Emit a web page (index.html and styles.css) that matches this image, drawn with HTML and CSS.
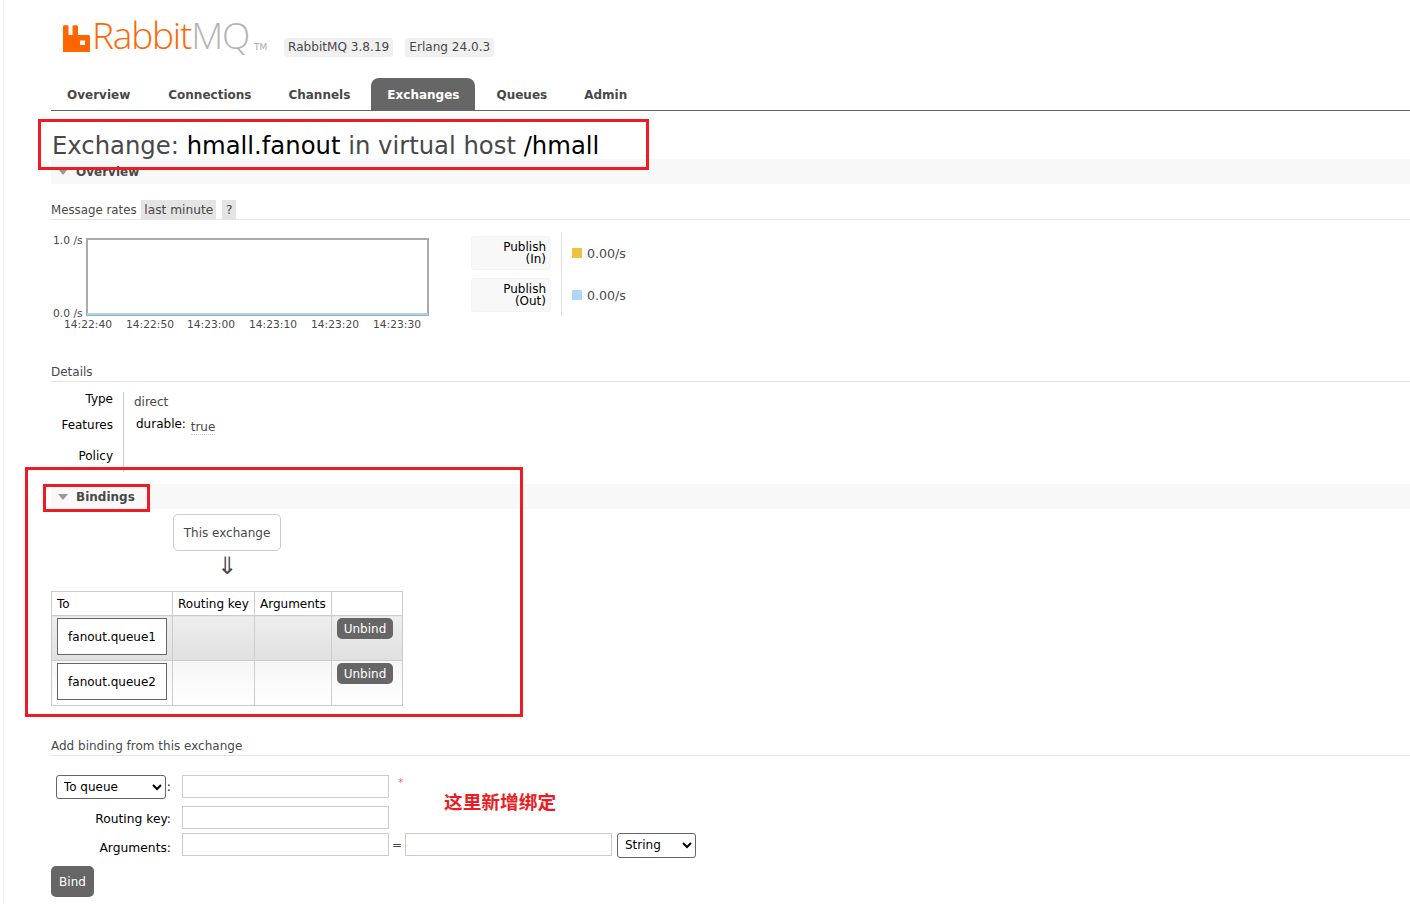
FILE: index.html
```html
<!DOCTYPE html>
<html lang="en">
<head>
    <meta charset="UTF-8">
    <meta name="viewport" content="width=device-width, initial-scale=1.0">
    <title>RabbitMQ Management</title>
    <link rel="stylesheet" href="styles.css">
</head>
<body>
    <div class="page">
        <header class="top">
            <div class="logo">
                <svg class="logo-icon" width="27" height="27" viewBox="0 0 27 27">
                    <path fill="#ff6600" fill-rule="evenodd" d="M0 27V1.5a1.2 1.2 0 0 1 1.2-1.2h3.1a1.2 1.2 0 0 1 1.2 1.2V10h4V1.5a1.2 1.2 0 0 1 1.2-1.2h3.1a1.2 1.2 0 0 1 1.2 1.2V10h10.6a1.4 1.4 0 0 1 1.4 1.4V27zM17 15.5v4.5h5v-4.5z"/>
                </svg>
                <span class="logo-text">Rabbit</span><span class="logo-text logo-mq">MQ</span><span class="logo-tm">TM</span>
            </div>
            <span class="version">RabbitMQ 3.8.19</span>
            <span class="version">Erlang 24.0.3</span>
        </header>

        <nav class="tabs">
            <a>Overview</a>
            <a>Connections</a>
            <a>Channels</a>
            <a class="active">Exchanges</a>
            <a>Queues</a>
            <a>Admin</a>
        </nav>

        <h1>Exchange: <b>hmall.fanout</b> in virtual host <b>/hmall</b></h1>

        <section class="section">
            <h2 class="section-bar"><i class="caret"></i>Overview</h2>
            <h3 class="sub first">Message rates <span class="chip">last minute</span> <span class="chip help">?</span></h3>
            <div class="rates">
                <svg class="chart" width="380" height="100" viewBox="0 0 380 100">
                    <g class="axis">
                        <text x="3" y="12">1.0 /s</text>
                        <text x="3" y="85">0.0 /s</text>
                        <text x="14" y="96">14:22:40</text>
                        <text x="76" y="96">14:22:50</text>
                        <text x="137" y="96">14:23:00</text>
                        <text x="199" y="96">14:23:10</text>
                        <text x="261" y="96">14:23:20</text>
                        <text x="323" y="96">14:23:30</text>
                    </g>
                    <rect x="37" y="7" width="341" height="76" fill="#fff" stroke="#aaa" stroke-width="2"/>
                    <rect x="37" y="81" width="341" height="2" fill="#a9d3f5"/>
                </svg>
                <div class="legend">
                    <div class="legend-labels">
                        <div class="legend-label">Publish<br>(In)</div>
                        <div class="legend-label">Publish<br>(Out)</div>
                    </div>
                    <div class="legend-values">
                        <div class="legend-value"><i class="swatch yellow"></i>0.00/s</div>
                        <div class="legend-value"><i class="swatch blue"></i>0.00/s</div>
                    </div>
                </div>
            </div>

            <h3 class="sub details">Details</h3>
            <div class="facts">
                <div class="fact-keys">
                    <div class="fact-key">Type</div>
                    <div class="fact-key">Features</div>
                    <div class="fact-key policy">Policy</div>
                </div>
                <div class="fact-vals">
                    <div class="fact-val">direct</div>
                    <div class="fact-val feature">durable: <abbr>true</abbr></div>
                </div>
            </div>
        </section>

        <section class="section bindings">
            <h2 class="section-bar"><i class="caret"></i>Bindings</h2>
            <div class="this-exchange">This exchange</div>
            <div class="down-arrow">⇓</div>
            <table class="list">
                <thead>
                    <tr><th class="c-to">To</th><th class="c-key">Routing key</th><th class="c-args">Arguments</th><th class="c-act"></th></tr>
                </thead>
                <tbody>
                    <tr class="alt1">
                        <td class="to"><span class="queue">fanout.queue1</span></td><td></td><td></td>
                        <td class="act"><button class="btn small">Unbind</button></td>
                    </tr>
                    <tr class="alt2">
                        <td class="to"><span class="queue">fanout.queue2</span></td><td></td><td></td>
                        <td class="act"><button class="btn small">Unbind</button></td>
                    </tr>
                </tbody>
            </table>
        </section>

        <h3 class="sub add">Add binding from this exchange</h3>
        <form class="bind-form" onsubmit="return false">
            <div class="row r1">
                <div class="label"><select class="sel q"><option>To queue</option></select>:</div>
                <input class="field" type="text">
                <span class="req">*</span>
            </div>
            <div class="row r2">
                <div class="label">Routing key:</div>
                <input class="field" type="text">
            </div>
            <div class="row r3">
                <div class="label">Arguments:</div>
                <input class="field" type="text">
                <span class="eq">=</span>
                <input class="field" type="text">
                <select class="sel s"><option>String</option></select>
            </div>
            <button class="btn bind">Bind</button>
        </form>
    </div>

    <!-- annotations pasted over the screenshot -->
    <div class="mark mark-title"></div>
    <div class="mark mark-bindings"></div>
    <div class="mark mark-head"></div>
    <div class="note">这里新增绑定</div>
</body>
</html>
```

FILE: styles.css
```css
html, body {
    margin: 0;
    padding: 0;
    height: 904px;
    overflow: hidden;
}

body {
    position: relative;
    font-family: "DejaVu Sans", sans-serif;
    font-size: 12px;
    color: #484848;
    background-color: #fff;
}

.page {
    margin-left: 3px;
    padding-left: 47px;
    border-left: 1px solid #f0f0f0;
    height: 904px;
    box-sizing: border-box;
}

/* header */
.top {
    display: flex;
    align-items: flex-start;
    height: 78px;
}

.logo {
    display: flex;
    align-items: flex-end;
    width: 233px;
    margin-top: 14px;
    height: 38px;
    padding-left: 12px;
    box-sizing: border-box;
}

.logo-icon {
    margin-right: 2px;
    flex: none;
}

.logo-text {
    font-family: "Open Sans", sans-serif;
    font-weight: 300;
    font-size: 37px;
    line-height: 44px;
    letter-spacing: -1.2px;
    color: #ff6600;
    margin-bottom: -5px;
}

.logo-mq {
    color: #b4b4b4;
}

.logo-tm {
    font-size: 9px;
    color: #aaa;
    margin-left: 5px;
}

.version {
    background-color: #f0f0f0;
    border-radius: 3px;
    padding: 2px 4px;
    margin-top: 38px;
    margin-right: 12px;
    line-height: 15px;
    font-size: 12.1px;
}

/* tabs */
.tabs {
    display: flex;
    height: 32px;
    border-bottom: 1px solid #666;
}

.tabs a {
    padding: 0 16px;
    margin-right: 5px;
    line-height: 35px;
    font-weight: bold;
    font-size: 12px;
    color: #484848;
    border-radius: 8px 8px 0 0;
}

.tabs a:first-child {
    margin-right: 6px;
}

.tabs a.active {
    background-color: #666;
    color: #fff;
}

h1 {
    margin: 0;
    height: 48px;
    padding-left: 1px;
    line-height: 69px;
    font-size: 24.3px;
    font-weight: normal;
    color: #484848;
    white-space: nowrap;
}

h1 b {
    font-weight: normal;
    color: #000;
}

/* sections */
.section-bar {
    margin: 0;
    height: 25px;
    background-color: #f8f8f8;
    font-size: 12px;
    line-height: 27px;
    color: #484848;
    display: flex;
    align-items: flex-start;
}

.caret {
    width: 0;
    height: 0;
    margin: 10px 8px 0 7px;
    border-left: 5px solid transparent;
    border-right: 5px solid transparent;
    border-top: 6px solid #999;
}

.sub {
    margin: 0;
    font-size: 12px;
    font-weight: normal;
    border-bottom: 1px solid #e4e4e4;
}

.sub.first {
    margin-top: 15px;
    height: 20px;
    line-height: 22px;
    font-size: 11.8px;
}

.chip {
    background-color: #e4e4e4;
    padding: 3px;
    margin-left: 1px;
    font-size: 12.2px;
}

.chip.help {
    padding: 3px 4px;
    margin-left: 2px;
}

.rates {
    display: flex;
    height: 140px;
    padding-top: 12px;
    box-sizing: border-box;
}

.chart {
    display: block;
    margin-left: -1px;
    margin-right: 41px;
    flex: none;
    height: 100px;
}

.axis text {
    font-size: 10.7px;
    fill: #484848;
    font-family: "DejaVu Sans", sans-serif;
}

.legend {
    display: flex;
    height: 84px;
}

.legend-labels {
    width: 80px;
    padding-top: 4px;
    padding-right: 10px;
    border-right: 1px solid #ddd;
}

.legend-label {
    width: 80px;
    height: 34px;
    box-sizing: border-box;
    padding: 4px 4px 0 0;
    margin-bottom: 8px;
    text-align: right;
    line-height: 12px;
    color: #000;
    background-color: #f8f8f8;
    border: 1px solid #f4f4f4;
    border-radius: 3px;
}

.legend-values {
    padding: 4px 0 0 10px;
    font-size: 12.6px;
}

.legend-value {
    display: flex;
    align-items: center;
    height: 34px;
    margin-bottom: 8px;
}

.swatch {
    width: 10px;
    height: 10px;
    margin-right: 5px;
}

.yellow { background-color: #edc240; }
.blue { background-color: #afd8f8; }

.sub.details {
    height: 20px;
    line-height: 22px;
    margin-top: 1px;
}

.facts {
    display: flex;
    height: 90px;
    padding-top: 10px;
    box-sizing: border-box;
}

.fact-keys {
    width: 72px;
    border-right: 1px solid #ccc;
}

.fact-key {
    text-align: right;
    height: 25px;
    line-height: 15px;
    padding-right: 10px;
    color: #000;
}

.fact-key:first-child {
    height: 26px;
}

.fact-key.policy {
    padding-top: 6px;
}

.fact-vals {
    padding-left: 10px;
}

.fact-val {
    height: 22px;
    line-height: 20px;
}

.fact-val.feature {
    color: #000;
    padding-left: 2px;
}

abbr {
    color: #484848;
    margin-left: 1px;
    position: relative;
    top: 3px;
    border-bottom: 1px dotted #ccc;
}

/* bindings */
.bindings {
    margin-top: 12px;
}

.this-exchange {
    width: 108px;
    height: 37px;
    box-sizing: border-box;
    margin: 5px 0 0 122px;
    border: 1px solid #ccc;
    border-radius: 5px;
    text-align: center;
    line-height: 37px;
}

.down-arrow {
    width: 108px;
    margin-left: 122px;
    height: 40px;
    text-align: center;
    font-size: 24px;
    line-height: 30px;
}

.list {
    border-collapse: collapse;
    table-layout: fixed;
    width: 352px;
}

.list th, .list td {
    border: 1px solid #ccc;
    padding: 0;
}

.list th {
    height: 23px;
    font-weight: normal;
    color: #000;
    text-align: left;
    padding-left: 5px;
    background-color: #fff;
}

.c-to { width: 115px; }
.c-key { width: 76px; }
.c-args { width: 71px; }

.list td {
    height: 44px;
    vertical-align: top;
}

.alt1 td { background: linear-gradient(#eee, #e0e0e0); }
.alt2 td { background: linear-gradient(#f6f6f6, #fff); }

.list td.to,
.list td.act {
    height: 42px;
    padding-top: 2px;
}

.list td.act {
    padding-left: 5px;
}

.queue {
    display: block;
    width: 110px;
    height: 37px;
    box-sizing: border-box;
    margin-left: 5px;
    border: 1px solid #666;
    background-color: #fff;
    color: #000;
    text-align: center;
    line-height: 37px;
}

.btn {
    display: block;
    border: 0;
    background-color: #666;
    color: #fff;
    font-family: inherit;
    font-size: 12px;
    border-radius: 5px;
    padding: 0;
}

.btn.small {
    width: 56px;
    height: 21px;
}

/* add binding form */
.sub.add {
    margin-top: 28px;
    height: 21px;
    line-height: 24px;
}

.bind-form {
    padding-top: 19px;
}

.row {
    display: flex;
    align-items: center;
}

.r1 { height: 23px; margin-bottom: 8px; }
.r2 { height: 23px; margin-bottom: 4px; }
.r3 { height: 23px; margin-bottom: 10px; }

.label {
    width: 120px;
    margin-right: 11px;
    text-align: right;
    color: #000;
    white-space: nowrap;
    flex: none;
    font-size: 12.3px;
}

.r2 .label { padding-top: 3px; }
.r3 .label { padding-top: 6px; }

.field {
    width: 207px;
    height: 23px;
    box-sizing: border-box;
    border: 1px solid #ccc;
    padding: 0;
    margin: 0;
    flex: none;
}

.req {
    margin: -8px 0 0 9px;
    color: #f66;
    font-size: 11px;
}

.eq {
    width: 16px;
    text-align: center;
}

.sel {
    font-family: inherit;
    font-size: 12px;
    color: #000;
    background-color: #fff;
    border: 1px solid #666;
    border-radius: 3px;
    height: 24px;
    padding-left: 3px;
}

.sel.q { width: 110px; margin-right: 1px; }
.sel.s { width: 79px; height: 25px; margin: 1px 0 0 5px; }

.btn.bind {
    width: 43px;
    height: 31px;
}

/* red annotations */
.mark {
    position: absolute;
    border: 3px solid #ed1c24;
    box-sizing: border-box;
    pointer-events: none;
}

.mark-title { left: 38px; top: 119px; width: 611px; height: 51px; }
.mark-bindings { left: 25px; top: 467px; width: 498px; height: 250px; }
.mark-head { left: 43px; top: 484px; width: 107px; height: 28px; }

.note {
    position: absolute;
    left: 444px;
    top: 788px;
    font-family: "Noto Sans CJK SC", sans-serif;
    font-size: 18.7px;
    line-height: 26px;
    font-weight: bold;
    color: #ed1c24;
}
```
